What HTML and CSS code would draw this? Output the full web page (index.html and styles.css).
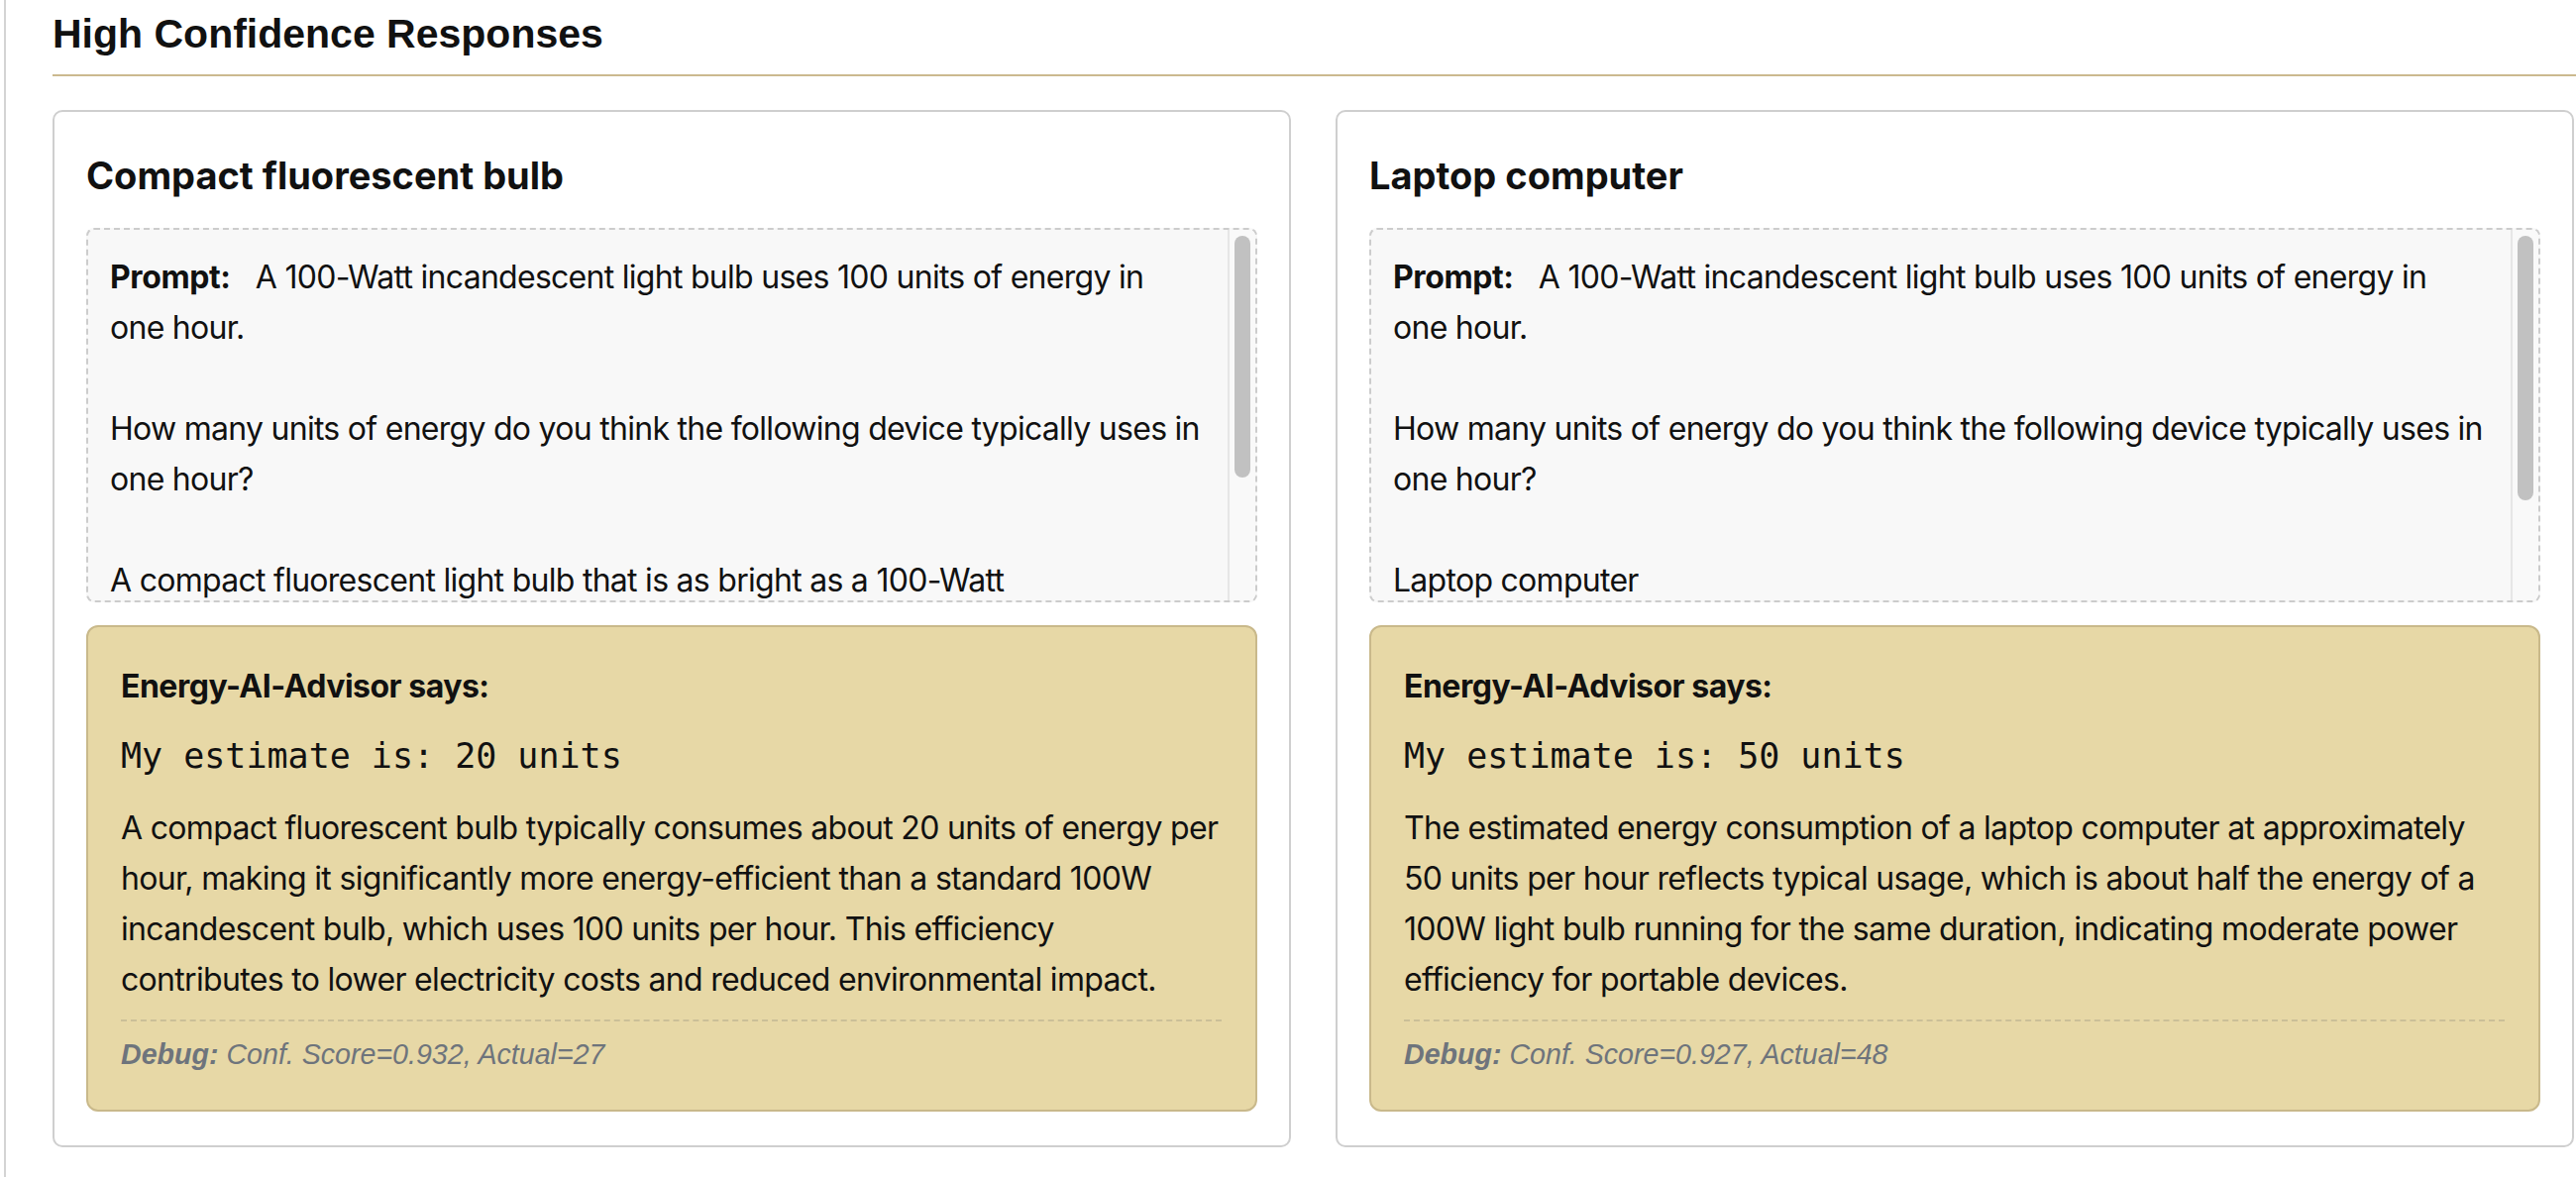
FILE: index.html
```html
<!DOCTYPE html>
<html lang="en">
<head>
<meta charset="utf-8">
<title>High Confidence Responses</title>
<link rel="stylesheet" href="styles.css">
</head>
<body>
<div class="page">
  <section class="section">
    <h2 class="section-title">High Confidence Responses</h2>
    <div class="cards">
      <article class="card">
        <h3 class="card-title">Compact fluorescent bulb</h3>
        <div class="prompt">
          <div class="prompt-text"><strong class="prompt-label">Prompt:</strong> A 100-Watt incandescent light bulb uses 100 units of energy in one hour.

How many units of energy do you think the following device typically uses in one hour?

A compact fluorescent light bulb that is as bright as a 100-Watt incandescent light bulb.</div>
          <div class="scrollbar"><div class="thumb" style="height: 244px"></div></div>
        </div>
        <div class="advisor">
          <div class="advisor-head">Energy-AI-Advisor says:</div>
          <div class="estimate">My estimate is: 20 units</div>
          <p class="explanation">A compact fluorescent bulb typically consumes about 20 units of energy per hour, making it significantly more energy-efficient than a standard 100W incandescent bulb, which uses 100 units per hour. This efficiency contributes to lower electricity costs and reduced environmental impact.</p>
          <div class="debug"><strong>Debug:</strong> Conf. Score=0.932, Actual=27</div>
        </div>
      </article>
      <article class="card">
        <h3 class="card-title">Laptop computer</h3>
        <div class="prompt">
          <div class="prompt-text"><strong class="prompt-label">Prompt:</strong> A 100-Watt incandescent light bulb uses 100 units of energy in one hour.

How many units of energy do you think the following device typically uses in one hour?

Laptop computer</div>
          <div class="scrollbar"><div class="thumb" style="height: 267px"></div></div>
        </div>
        <div class="advisor">
          <div class="advisor-head">Energy-AI-Advisor says:</div>
          <div class="estimate">My estimate is: 50 units</div>
          <p class="explanation">The estimated energy consumption of a laptop computer at approximately 50 units per hour reflects typical usage, which is about half the energy of a 100W light bulb running for the same duration, indicating moderate power efficiency for portable devices.</p>
          <div class="debug"><strong>Debug:</strong> Conf. Score=0.927, Actual=48</div>
        </div>
      </article>
    </div>
  </section>
</div>
</body>
</html>
```
FILE: styles.css
```css
html, body {
  margin: 0;
  padding: 0;
  background: #ffffff;
  overflow: hidden;
}

body {
  font-family: Inter, "Noto Sans", "Liberation Sans", sans-serif;
  color: #111111;
}

.page {
  margin-left: 4px;
  border-left: 2px solid #d4d4d4;
  min-height: 1188px;
  padding-left: 47px;
}

.section-title {
  margin: 0;
  padding-top: 11px;
  padding-bottom: 18px;
  font-family: "Liberation Sans", Arial, sans-serif;
  font-weight: 700;
  font-size: 41px;
  line-height: 46px;
  color: #111111;
  border-bottom: 2px solid #cbb98f;
}

.cards {
  display: grid;
  grid-template-columns: 1250px 1250px;
  column-gap: 45px;
  margin-top: 34px;
}

.card {
  border: 2px solid #cfcfcf;
  border-radius: 10px;
  padding: 32px;
  background: #ffffff;
  height: 1047px;
  box-sizing: border-box;
}

.card-title {
  margin: 10px 0 30px 0;
  font-size: 38px;
  line-height: 45px;
  font-weight: 700;
  color: #111111;
}

.prompt {
  box-sizing: border-box;
  height: 378px;
  display: flex;
  overflow: hidden;
  background: #f8f8f8;
  border: 2px dashed #cccccc;
  border-radius: 8px;
}

.prompt-text {
  flex: 1;
  min-width: 0;
  overflow: hidden;
  padding: 22px 25px 0 22px;
  font-size: 32px;
  line-height: 51px;
  letter-spacing: -0.72px;
  white-space: pre-wrap;
  color: #111111;
}

.prompt-label {
  font-weight: 700;
  letter-spacing: -0.4px;
  margin-right: 17px;
}

.scrollbar {
  flex: 0 0 28px;
  box-sizing: border-box;
  border-left: 2px solid #e6e6e6;
  background: #f9f9f9;
  padding: 6px 5px 0 5px;
}

.thumb {
  background: #c1c1c1;
  border-radius: 8px;
}

.advisor {
  margin-top: 23px;
  background: #e7d8a6;
  border: 2px solid #c9b98b;
  border-radius: 12px;
  padding: 34px 34px 33px 33px;
}

.advisor-head {
  font-weight: 700;
  font-size: 32px;
  line-height: 51px;
  letter-spacing: -0.5px;
}

.estimate {
  margin-top: 17px;
  font-family: "DejaVu Sans Mono", "Liberation Mono", monospace;
  font-size: 35px;
  line-height: 56px;
  color: #111111;
}

.explanation {
  margin: 19px 0 0 0;
  font-size: 32px;
  line-height: 51px;
  letter-spacing: -0.68px;
}

.debug {
  margin-top: 15px;
  padding-top: 11px;
  border-top: 2px dashed #cbbf98;
  font-family: "Liberation Sans", Arial, sans-serif;
  font-style: italic;
  font-size: 28.6px;
  line-height: 45px;
  color: #6e747c;
}

.debug strong {
  font-weight: 700;
}
```
